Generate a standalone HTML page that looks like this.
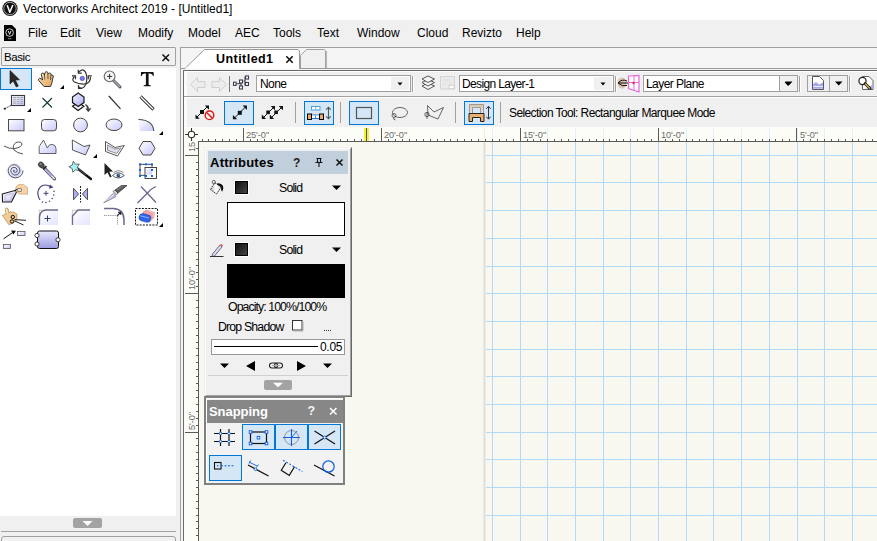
<!DOCTYPE html>
<html><head><meta charset="utf-8">
<style>
*{box-sizing:border-box;margin:0;padding:0}
html,body{width:877px;height:541px;overflow:hidden;background:#f0f0f0;font-family:"Liberation Sans",sans-serif;color:#000}
.a{position:absolute}
.t{position:absolute;white-space:nowrap;line-height:1}
svg.o{position:absolute;left:0;top:0;overflow:visible}
</style></head><body>
<div class="a" style="left:0px;top:0px;width:877px;height:20px;background:#fff;"></div>
<svg class="o" width="877" height="20">
<circle cx="10" cy="8.5" r="7.6" fill="#111"/>
<circle cx="10" cy="8.5" r="6.2" fill="none" stroke="#ddd" stroke-width="0.7"/>
<path d="M7.2 5.2 L9.8 12.3 L12.8 5.0" stroke="#fff" stroke-width="1.5" fill="none" stroke-linejoin="round"/>
</svg>
<div class="t" style="left:23px;top:3px;font-size:12px;">Vectorworks Architect 2019 - [Untitled1]</div>
<svg class="o" width="40" height="50">
<path d="M4 25 H12 L16 29 V41 H4 Z" fill="#000"/>
<circle cx="9.6" cy="32.6" r="3.8" fill="none" stroke="#fff" stroke-width="0.8"/>
<path d="M8.2 30.8 L9.6 34.4 L11.1 30.8" stroke="#fff" stroke-width="0.9" fill="none"/>
<rect x="8" y="38.2" width="3.5" height="1" fill="#888"/>
</svg>
<div class="t" style="left:28px;top:27px;font-size:12px;">File</div>
<div class="t" style="left:60px;top:27px;font-size:12px;">Edit</div>
<div class="t" style="left:96px;top:27px;font-size:12px;">View</div>
<div class="t" style="left:138px;top:27px;font-size:12px;">Modify</div>
<div class="t" style="left:188px;top:27px;font-size:12px;">Model</div>
<div class="t" style="left:235px;top:27px;font-size:12px;">AEC</div>
<div class="t" style="left:273px;top:27px;font-size:12px;">Tools</div>
<div class="t" style="left:317px;top:27px;font-size:12px;">Text</div>
<div class="t" style="left:357px;top:27px;font-size:12px;">Window</div>
<div class="t" style="left:417px;top:27px;font-size:12px;">Cloud</div>
<div class="t" style="left:462px;top:27px;font-size:12px;">Revizto</div>
<div class="t" style="left:516px;top:27px;font-size:12px;">Help</div>
<div class="a" style="left:0px;top:47px;width:177px;height:494px;background:#f0f0f0;"></div>
<div class="a" style="left:1px;top:47px;width:175px;height:19px;background:#f0f0f0;border:1px solid #a0a0a0;border-radius:1px;"></div>
<div class="t" style="left:4px;top:52px;font-size:11.5px;letter-spacing:-0.4px;">Basic</div>
<svg class="o" width="200" height="70"><path d="M162.5 54.5 L169 61 M169 54.5 L162.5 61" stroke="#111" stroke-width="1.5"/></svg>
<div class="a" style="left:0px;top:68px;width:176px;height:448px;background:#fff;"></div>
<div class="a" style="left:0px;top:516px;width:176px;height:15px;background:#f0f0f0;"></div>
<div class="a" style="left:73px;top:518px;width:29px;height:10px;background:#a3a3a3;border-radius:2px;"></div>
<svg class="o" width="200" height="541"><path d="M82.5 521 H92.5 L87.5 526 Z" fill="#fff"/></svg>
<div class="a" style="left:1px;top:531px;width:175px;height:1px;background:#a0a0a0;"></div>
<div class="a" style="left:1px;top:536px;width:175px;height:10px;border:1px solid #a0a0a0;border-radius:3px;"></div>
<svg class="o" width="877" height="541"><defs>
<linearGradient id="gf" x1="0" y1="0" x2="1" y2="1"><stop offset="0" stop-color="#ffffff"/><stop offset="1" stop-color="#c8c8ff"/></linearGradient>
<linearGradient id="gb" x1="0" y1="0" x2="0" y2="1"><stop offset="0" stop-color="#e8e8ff"/><stop offset="1" stop-color="#9c9ce0"/></linearGradient>
<linearGradient id="gb2" x1="0" y1="0" x2="1" y2="1"><stop offset="0" stop-color="#f2f2ff"/><stop offset="1" stop-color="#a8a8f4"/></linearGradient>
</defs>
<rect x="0.5" y="68.5" width="31" height="21" fill="#d5e6f6" stroke="#0078d7" stroke-width="1"/>
<path d="M10 70.5 L10 84 L13.2 81 L16.3 87 L18.3 86 L15.3 80 L19.5 79.8 Z" fill="#2a2a2a" stroke="#111" stroke-width="0.6"/>
<defs><linearGradient id="gh" x1="0" y1="0" x2="1" y2="1"><stop offset="0" stop-color="#fbf0c0"/><stop offset="0.5" stop-color="#f0c488"/><stop offset="1" stop-color="#e0a060"/></linearGradient></defs>
<path d="M44 86.5 L38.8 80.6 Q37.8 79 39.4 78.4 Q41 78.2 42.6 80 L41.3 74.6 Q41.2 73 42.8 73 Q44 73.3 44.4 75 L45 72.9 Q45.3 71.4 46.9 71.7 Q48.1 72 47.9 73.8 L48.4 73.6 Q49.5 72.7 50.6 73.4 Q51.2 74 50.9 75.6 L51.6 75 Q53 74.7 53.3 76.2 L52 82.2 L50.6 86.5 Z" fill="url(#gh)" stroke="#222" stroke-width="0.9"/>
<path d="M44.4 75 L44.9 79.5 M47.9 73.8 L48 79 M50.9 75.6 L50.5 80" stroke="#333" stroke-width="0.8"/>
<path d="M64 85 V89 H60 Z" fill="#000"/>
<g fill="none" stroke="#333" stroke-width="1.2">
<path d="M78.5 72.5 Q81 69.5 83.5 70 Q87 72.5 86.8 79 Q86.5 85 83.5 87.5 Q81 89 78.8 87"/>
<path d="M74.5 76.5 Q71.5 79.5 74 81.8 Q79 84.5 85.5 84 Q90.5 82.5 90.5 77"/>
<path d="M78.3 69.8 V73.2 H81.8 M72 75.8 H75.5 V79.2 M91.8 75.8 H88.3 V79.2 M78.5 85 V88.5 H82"/>
</g>
<circle cx="82.3" cy="78.4" r="2.2" fill="#7a7af0" stroke="#3838a8" stroke-width="0.6"/>
<line x1="113.5" y1="80.5" x2="120" y2="87" stroke="#555" stroke-width="3" stroke-linecap="round"/>
<line x1="113.8" y1="80.8" x2="119.6" y2="86.6" stroke="#aab" stroke-width="1.4" stroke-linecap="round"/>
<circle cx="109.6" cy="76.4" r="5.4" fill="#f4f4f4" stroke="#666" stroke-width="1.1"/>
<path d="M107 76.4 H112.2 M109.6 73.8 V79" stroke="#333" stroke-width="1"/>
<path d="M141 72 H153.5 L153.8 76 H153 Q152.5 73.5 150 73.5 H148.6 V84.6 Q148.8 85.3 150.8 85.4 V86.2 H143.6 V85.4 Q145.7 85.3 145.9 84.6 V73.5 H144.6 Q142 73.5 141.6 76 H140.8 Z" fill="#111"/>
<!-- row2 -->
<rect x="11.5" y="95.5" width="13" height="10" fill="url(#gf)" stroke="#3a3a3a" stroke-width="1.1"/>
<path d="M13 97.5 H23 M13 99.3 H23 M13 101.3 H23 M13 103.2 H23" stroke="#888" stroke-width="0.7" stroke-dasharray="3 0.6"/>
<path d="M5 108.6 L11.3 105.2" stroke="#333" stroke-width="0.9" stroke-dasharray="1.4 0.5"/><rect x="3.8" y="107.8" width="1.8" height="1.8" fill="#222"/>
<path d="M31 108 V112 H27 Z" fill="#000"/>
<path d="M42.5 98 L52 107.5 M52 98 L42.5 107.5" stroke="#183c3c" stroke-width="1.2"/>
<path d="M72.5 106.3 L78 102.5 L84 106.3 L78 110.5 Z" fill="#f0f0fc" stroke="#111" stroke-width="1.1"/>
<path d="M72.5 97 L78.2 93 L84 97 V102.6 L78.2 106.5 L72.5 102.6 Z" fill="url(#gb2)" stroke="#1a1a1a" stroke-width="1.2"/>
<path d="M73.5 98 L78.2 100.5 L83 98" fill="none" stroke="#fff" stroke-width="0.6" opacity="0.6"/>
<path d="M85.3 104 Q89 105.5 88.8 108.5 L91.5 108.2 L88.3 112.3 L85.3 108.5 L87 108.6 Q87 106.5 85.3 105.3 Z" fill="#444"/>
<line x1="108.8" y1="96" x2="120.5" y2="108.8" stroke="#333" stroke-width="1.25"/>
<line x1="140.5" y1="96.5" x2="153.5" y2="109.5" stroke="#333" stroke-width="3.2"/>
<line x1="140.5" y1="96.5" x2="153" y2="109" stroke="#fff" stroke-width="1.2"/>
<!-- row3 -->
<rect x="8.5" y="119.5" width="15.5" height="11.3" fill="url(#gf)" stroke="#4a4a40" stroke-width="1"/>
<rect x="41.5" y="119.5" width="15" height="11.3" rx="3" fill="url(#gf)" stroke="#4a4a40" stroke-width="1"/>
<circle cx="80.5" cy="125" r="6.9" fill="url(#gf)" stroke="#4a4a40" stroke-width="1"/>
<ellipse cx="114" cy="124.8" rx="8" ry="5.8" fill="url(#gf)" stroke="#4a4a40" stroke-width="1"/>
<path d="M138.5 119.5 Q153 120 153.8 131 H140 Z" fill="url(#gf)"/><path d="M138.5 119.5 Q153 120 153.8 131" fill="none" stroke="#4a4a40" stroke-width="1.1"/>
<path d="M163 131 V135 H159 Z" fill="#000"/>
<!-- row4 -->
<path d="M4 146 Q9 149 15 148.5 Q22 147 22 144 Q21 141 16 142.5 Q12 145 14 150 Q17 153 23 154" fill="none" stroke="#555" stroke-width="1"/>
<path d="M39.2 153.5 V146.5 L43.5 140 L47.3 148 Q49 144 52 144.3 Q56 145 56 148.5 V153.5 Z" fill="url(#gf)" stroke="#555" stroke-width="0.9"/>
<path d="M72.3 140 L84 146.5 L90 145 L85.5 155 L72.5 150 Z" fill="url(#gf)" stroke="#444" stroke-width="0.9"/>
<path d="M97 154 V158 H93 Z" fill="#000"/>
<path d="M105.5 141.5 L115 147.5 L124.3 145.5 L117.5 156 L105.5 151.5 Z" fill="none" stroke="#444" stroke-width="0.9"/>
<path d="M107.5 145 L115 149 L121 148 L116.8 153.5 L107.5 150.3 Z" fill="#dde" stroke="#777" stroke-width="0.8"/>
<path d="M143 141.5 H151 L155 148.3 L151 155 H143 L139 148.3 Z" fill="url(#gf)" stroke="#4a4a40" stroke-width="1"/>
<!-- row5 -->
<circle cx="14" cy="170.5" r="7.8" fill="url(#gf)"/>
<g fill="none" stroke="#4a4a4a" stroke-width="0.9">
<path d="M14.6 170.5 a0.6 0.6 0 1 0 -1.2 0 a1.9 1.9 0 1 0 3.8 0 a3.2 3.2 0 1 0 -6.4 0 a4.5 4.5 0 1 0 9 0 a5.8 5.8 0 1 0 -11.6 0 a7.4 7.4 0 1 0 14.8 0"/>
</g>
<path d="M44.5 168.5 L54.5 178.8" stroke="#555" stroke-width="3.3" stroke-linecap="round"/>
<path d="M44.8 168.8 L54.2 178.5" stroke="#b4b4f6" stroke-width="1.8" stroke-linecap="round"/>
<path d="M52 176.3 L54.3 178.6" stroke="#fff" stroke-width="1" stroke-linecap="round"/>
<ellipse cx="41.3" cy="165" rx="3.6" ry="2.9" transform="rotate(45 41.3 165)" fill="#4a4a4a"/>
<ellipse cx="40.6" cy="164" rx="1.3" ry="0.9" transform="rotate(45 40.6 164)" fill="#888"/>
<path d="M42.5 168.8 L45.8 165.5 L47 166.8 L43.8 170 Z" fill="#222"/>
<path d="M77.5 168.5 L91 179" stroke="#111" stroke-width="2.3" stroke-linecap="round"/>
<path d="M78.5 169 L86 175" stroke="#777" stroke-width="0.7"/>
<path d="M73.3 161.2 L75.5 164.3 L79.3 164 L77.3 167.2 L79 170.5 L75.3 169.8 L72.8 172.3 L72.2 168.6 L68.9 166.8 L72.3 165 Z" fill="#a6f2f4" stroke="#3a3a3a" stroke-width="0.7"/>
<path d="M104.5 163 L104.5 175 L107.5 172.5 L110 177.5 L111.7 176.7 L109.3 171.7 L113 171.5 Z" fill="#222"/>
<path d="M112.5 175.5 Q118 170 124.3 175.5 Q118 180.5 112.5 175.5 Z" fill="#fff" stroke="#444" stroke-width="0.9"/>
<path d="M113.5 172.5 Q118.5 169 123.5 172.5" fill="none" stroke="#555" stroke-width="0.7"/>
<circle cx="118.4" cy="175.4" r="1.9" fill="#2b5080"/><circle cx="119" cy="174.9" r="0.6" fill="#9cf"/>
<rect x="140" y="164.3" width="12" height="11" fill="none" stroke="#333" stroke-width="0.9"/>
<rect x="145" y="167.5" width="11.5" height="11" fill="#fff" stroke="#333" stroke-width="0.9"/>
<rect x="146" y="168.5" width="6" height="6" fill="url(#gf)"/>
<g fill="#0a64ff"><rect x="139" y="163.3" width="2" height="2"/><rect x="145" y="163.3" width="2" height="2"/><rect x="151" y="163.3" width="2" height="2"/><rect x="139" y="169" width="2" height="2"/><rect x="151" y="169" width="2" height="2"/><rect x="139" y="175" width="2" height="2"/><rect x="145" y="175" width="2" height="2"/><rect x="151" y="175" width="2" height="2"/></g>
<!-- row6 -->
<path d="M2.3 194 L15.5 190.3 L16.5 192 L11.5 202 L2.5 202 Z" fill="url(#gf)" stroke="#1a1a1a" stroke-width="1.1"/>
<path d="M5 195.5 L13.5 193.3 L10.5 200.3 L5 200.3 Z" fill="none" stroke="#aab" stroke-width="0.6"/>
<path d="M15.5 188.5 Q16.5 184.5 20 184.3 L23.5 184.5 L27.5 187.5 V194.3 L19 194 Q16 192.5 15.5 188.5 Z" fill="#f6d2a4" stroke="#b08a5a" stroke-width="0.5"/>
<rect x="17.8" y="188.8" width="3.4" height="2.4" fill="#fff" stroke="#333" stroke-width="0.6"/>
<path d="M14.5 191 L17 189" stroke="#222" stroke-width="1"/>
<g stroke="#44447a" fill="none" stroke-width="1.2"><path d="M51 187 Q47 184 42.5 185.5 Q38 188 37.8 193 Q38 197 40 200"/></g>
<path d="M50 184.5 L53.5 187.5 L49 188.8 Z" fill="#44447a"/>
<g fill="#44447a"><circle cx="42.5" cy="202" r="0.8"/><circle cx="46" cy="202.5" r="0.8"/><circle cx="49.5" cy="201.2" r="0.8"/><circle cx="52.2" cy="198.5" r="0.8"/><circle cx="53.8" cy="195" r="0.8"/><circle cx="54" cy="191.3" r="0.8"/></g>
<path d="M43.5 193.3 H48.5 M46 190.8 V195.8" stroke="#44447a" stroke-width="1"/>
<path d="M73.5 188.3 L78.6 194 L73.5 199.8 Z M87.5 188.3 L82.4 194 L87.5 199.8 Z" fill="#b0b0f4" stroke="#444" stroke-width="0.9"/>
<path d="M80.5 186 V202.5" stroke="#222" stroke-width="1" stroke-dasharray="2 1"/>
<path d="M103.8 202.8 L113 193.5 L116 196.5 Z" fill="#c8c8fa" stroke="#444" stroke-width="0.6"/>
<path d="M104.5 202 L113.5 194.5" stroke="#fff" stroke-width="0.6"/>
<path d="M113 191.5 L115 190 L118 193 L116.3 195 Z" fill="#d8d8d8" stroke="#333" stroke-width="0.6"/>
<path d="M115 190 L121.5 185.5 H127 L118 193 Z" fill="#5a5a5a" stroke="#222" stroke-width="0.6"/>
<path d="M117 190 L123 186" stroke="#999" stroke-width="0.7"/>
<path d="M137.5 203 L150.5 190 M141 186.5 L156 202.5 M150 190 L155.8 186.5" stroke="#6a6a90" stroke-width="1.3"/>
<!-- row7 -->
<path d="M2.5 215.5 L6 213.8 L5.3 208.8 Q6.5 207.3 8 208.5 L9 213 L10.5 211.6 L12 212.4 L13.5 212 L15 213 L16.8 214 L17 219.5 L14 222.5 L9 224.8 Z" fill="#f3cc95" stroke="#8a6030" stroke-width="0.5"/>
<path d="M6.2 209 L7.3 213.5" stroke="#fff3c0" stroke-width="1"/>
<circle cx="12.8" cy="217" r="1.7" fill="none" stroke="#111" stroke-width="1"/>
<circle cx="12" cy="221.5" r="1.7" fill="none" stroke="#111" stroke-width="1"/>
<path d="M14.5 219.6 L26 220.3 M14.5 220.8 L23.5 225" stroke="#222" stroke-width="1"/>
<path d="M39.5 225 V217 Q40 210.5 46 210 H58" fill="none" stroke="#6a6a90" stroke-width="1.4"/>
<path d="M41 212 V225 H58 V211 H46 Q41 211 41 217 Z" fill="url(#gf)" opacity="0.5"/>
<path d="M39.3 216.5 V210.2 H46" fill="none" stroke="#555" stroke-width="0.7" stroke-dasharray="0.9 1"/>
<path d="M44.5 218.5 H50.5 M47.5 215.5 V221.5" stroke="#3a3a70" stroke-width="1"/>
<path d="M72.5 225 V216 L78 210 H90" fill="none" stroke="#6a6a90" stroke-width="1.4"/>
<path d="M73.5 217 L78.5 211.2 H90 V225 H73.5 Z" fill="url(#gf)" opacity="0.5"/>
<path d="M72.3 215.5 V210.2 H78" fill="none" stroke="#555" stroke-width="0.7" stroke-dasharray="0.9 1"/>
<path d="M104 208.5 H113 Q124 209 124 220 V225" fill="none" stroke="#6a6a90" stroke-width="1.5"/>
<path d="M104 215.5 H116 M117.5 216 V225" fill="none" stroke="#444" stroke-width="0.7" stroke-dasharray="0.9 1"/>
<path d="M117 216 L120.5 212.5 M118 212.3 H120.8 V215" fill="none" stroke="#223" stroke-width="1.1"/>
<rect x="135.5" y="208.5" width="22" height="16.5" fill="none" stroke="#111" stroke-width="1" stroke-dasharray="2 1.2"/>
<path d="M143 212 L147 210 L154.5 212.5 L153.8 217.5 L149.5 222 L144 215 Z" fill="#f2a4a4" stroke="#c07070" stroke-width="0.5"/>
<path d="M147.5 210.5 L154 213 L153 217" fill="none" stroke="#fff" stroke-width="0.6" opacity="0.7"/>
<path d="M139 216.8 Q139.8 213.6 143 213.6 L150 215.6 Q151.2 216.6 150.7 218.2 L149.6 221.6 Q148.6 222.6 146 222.1 L140.6 220.6 Q139 219.6 139 218 Z" fill="#2d66ea" stroke="#0c2c92" stroke-width="0.5"/>
<path d="M140.3 215.8 L149 218" stroke="#a8c4ff" stroke-width="0.8"/>
<path d="M163 223 V227 H159 Z" fill="#000"/>
<!-- row8 -->
<path d="M3.5 238.8 L13.5 232" stroke="#111" stroke-width="1"/><path d="M11 230.5 L16 230.8 L13.5 234.5 Z" fill="#111"/>
<rect x="17.5" y="231.5" width="7.5" height="4" fill="url(#gf)" stroke="#555" stroke-width="0.8"/>
<rect x="3.5" y="244.5" width="7" height="4" fill="url(#gf)" stroke="#555" stroke-width="0.8"/>
<rect x="37.5" y="231" width="21" height="17.5" rx="2" fill="url(#gb)" stroke="#111" stroke-width="1"/>
<circle cx="37" cy="235.5" r="2.1" fill="#fff" stroke="#111" stroke-width="0.8"/>
<circle cx="37" cy="244" r="2.1" fill="#fff" stroke="#111" stroke-width="0.8"/>
<circle cx="58" cy="239.8" r="2.1" fill="#fff" stroke="#111" stroke-width="0.8"/>
</svg>
<div class="a" style="left:180px;top:47px;width:697px;height:494px;background:#f5f5f5;border-left:1px solid #a0a0a0;border-top:1px solid #a0a0a0;"></div>
<svg class="o" width="877" height="541">
<path d="M300.5 68.5 V55.5 L306.5 49.5 H324.5 L325.5 50.5 V68.5 Z" fill="#f0f0f0" stroke="#a0a0a0" stroke-width="1"/>
<path d="M326.5 51 V68.5" stroke="#b8b8b8" stroke-width="1.2"/>
<path d="M181 68.5 H185 L204.5 49.5 H298 L299.5 51 V68.5 H877" fill="#fff" stroke="#999" stroke-width="1"/>
<path d="M185.5 68 H299" stroke="#fff" stroke-width="1"/>
<path d="M286.3 56.3 L292.7 62.7 M292.7 56.3 L286.3 62.7" stroke="#111" stroke-width="1.6"/>
</svg>
<div class="t" style="left:216px;top:53px;font-size:12.5px;font-weight:700;letter-spacing:0.45px;">Untitled1</div>
<div class="a" style="left:183px;top:70px;width:694px;height:471px;background:#f0f0f0;border-left:1px solid #6a6a6a;border-top:1px solid #6a6a6a;"></div>
<div class="a" style="left:184px;top:71px;width:693px;height:1px;background:#fff;"></div>
<div class="a" style="left:184px;top:71px;width:3px;height:56px;background:#fafafa;"></div>
<div class="a" style="left:184px;top:96px;width:693px;height:1px;background:#a0a0a0;"></div>
<div class="a" style="left:184px;top:97px;width:693px;height:1px;background:#fff;"></div>
<div class="a" style="left:256px;top:75px;width:155px;height:17px;background:#fff;border:1px solid #a0a0a0;"></div>
<div class="a" style="left:391px;top:77px;width:18px;height:13px;background:#f0f0f0;"></div>
<svg class="o" width="877" height="541"><path d="M397.5 82.5 H402.5 L400 85.5 Z" fill="#000"/></svg>
<div class="a" style="left:459px;top:75px;width:155px;height:17px;background:#fff;border:1px solid #a0a0a0;"></div>
<div class="a" style="left:594px;top:77px;width:18px;height:13px;background:#f0f0f0;"></div>
<svg class="o" width="877" height="541"><path d="M600.5 82.5 H605.5 L603 85.5 Z" fill="#000"/></svg>
<div class="a" style="left:643px;top:75px;width:155px;height:17px;background:#fff;border:1px solid #a0a0a0;"></div>
<div class="a" style="left:779px;top:75px;width:19px;height:17px;background:#f0f0f0;border:1px solid #a0a0a0;"></div>
<svg class="o" width="877" height="541"><path d="M784.5 82 H791.5 L788 86 Z" fill="#000"/></svg>
<div class="t" style="left:260px;top:78px;font-size:12px;letter-spacing:-0.6px;">None</div>
<div class="t" style="left:462px;top:78px;font-size:12px;letter-spacing:-0.65px;">Design Layer-1</div>
<div class="t" style="left:646px;top:78px;font-size:12px;letter-spacing:-0.55px;">Layer Plane</div>
<div class="a" style="left:807px;top:75px;width:41px;height:17px;background:#f0f0f0;border:1px solid #a0a0a0;"></div>
<div class="a" style="left:829px;top:75px;width:1px;height:17px;background:#a0a0a0;"></div>
<svg class="o" width="877" height="541">
<path d="M190.5 84.5 L197.5 77.5 V81.5 H205 V87.5 H197.5 V91.5 Z" fill="#ececec" stroke="#cfcfcf" stroke-width="1"/>
<path d="M226.5 84.5 L219.5 77.5 V81.5 H212 V87.5 H219.5 V91.5 Z" fill="#ececec" stroke="#cfcfcf" stroke-width="1"/>
<path d="M229.5 76 V92" stroke="#777" stroke-width="1"/>
<g fill="#fff" stroke="#3c3c50" stroke-width="1.1">
<path d="M236 83.8 H241 M241 81 V86.5 M243.5 81 H245 V76.5 M245 81 V85.5"/>
<rect x="233.5" y="82.2" width="2.6" height="3.2"/>
<rect x="239.5" y="80" width="3" height="3"/>
<rect x="239.5" y="86" width="3" height="3"/>
<rect x="245.5" y="76" width="3" height="3"/>
<rect x="245.5" y="82.5" width="3" height="3"/>
</g>
<rect x="412" y="76" width="1" height="16" fill="#a0a0a0"/><rect x="413" y="76" width="1" height="16" fill="#fdfdfd"/><rect x="615" y="76" width="1" height="16" fill="#a0a0a0"/><rect x="616" y="76" width="1" height="16" fill="#fdfdfd"/><rect x="799" y="76" width="1" height="16" fill="#a0a0a0"/><rect x="800" y="76" width="1" height="16" fill="#fdfdfd"/><rect x="849" y="76" width="1" height="16" fill="#a0a0a0"/><rect x="850" y="76" width="1" height="16" fill="#fdfdfd"/>
<g fill="#f4f4f4" stroke="#444" stroke-width="0.9">
<path d="M422 86 L428 83 L434.5 86 L428 89.5 Z"/>
<path d="M422 82.5 L428 79.5 L434.5 82.5 L428 86 Z"/>
<path d="M422 79 L428 76 L434.5 79 L428 82.5 Z"/>
</g>
<rect x="440.5" y="76.5" width="14" height="12.5" fill="#eaeaea" stroke="#d4d4d4" stroke-width="1"/>
<path d="M443 80 H451 M443 84 H447 M449 84 H453" stroke="#d0d0d0" stroke-width="1" stroke-dasharray="1 1"/>
<rect x="449" y="85.5" width="5" height="3" fill="#fff" stroke="#d0d0d0" stroke-width="0.8"/>
<ellipse cx="622" cy="83" rx="4.5" ry="5.5" fill="#c8a078" opacity="0.55"/>
<path d="M618 83 Q622 78.5 627 81 M618 83 Q622 87 627 85.5" fill="none" stroke="#111" stroke-width="1"/>
<path d="M618.5 83 H632" stroke="#111" stroke-width="1"/>
<path d="M628.5 76 L639 75.5 V92 L628.5 88.5 Z" fill="#fff" stroke="#ee66dd" stroke-width="1.2"/>
<path d="M634 75.5 V90 M628.5 82.5 H639" stroke="#ee66dd" stroke-width="1"/>
<circle cx="633.5" cy="83" r="1" fill="#d00"/>
<path d="M785 81.5 H792.5 L788.7 85.5 Z" fill="#000"/>
<path d="M835 81.5 H842.5 L838.7 85.5 Z" fill="#000"/>
<path d="M812.5 76.5 H819.5 L823.5 80.5 V89.5 H812.5 Z" fill="#fff" stroke="#444" stroke-width="0.9"/>
<path d="M813 88.8 V84 L816 82 L819 84.5 L823 82.5 V88.8 Z" fill="#a8a8f0"/>
<path d="M813 86.5 H823" stroke="#fff" stroke-width="0.8"/>
<path d="M862.5 76.5 H869 L873 80.5 V89.5 H862.5 Z" fill="#fff" stroke="#555" stroke-width="0.9"/>
<path d="M866 89 H873 V84 Z" fill="#b0b0f0"/>
<circle cx="862.5" cy="81" r="3.6" fill="#fff" stroke="#222" stroke-width="1.2"/>
<path d="M865 83.5 L870 88.5" stroke="#222" stroke-width="2.8" stroke-linecap="round"/>
<path d="M865.5 84 L869.6 88.1" stroke="#d8b040" stroke-width="1.3" stroke-linecap="round"/>
</svg>
<div class="t" style="left:509px;top:107px;font-size:12px;letter-spacing:-0.6px;">Selection Tool: Rectangular Marquee Mode</div>
<svg class="o" width="877" height="541">
<rect x="224.5" y="101.5" width="29" height="23" fill="#d5e6f6" stroke="#0078d7" stroke-width="1"/><rect x="304.5" y="101.5" width="29" height="23" fill="#d5e6f6" stroke="#0078d7" stroke-width="1"/><rect x="349.5" y="101.5" width="29" height="23" fill="#d5e6f6" stroke="#0078d7" stroke-width="1"/><rect x="464.5" y="101.5" width="29" height="23" fill="#d5e6f6" stroke="#0078d7" stroke-width="1"/>
<path d="M295.5 102 V123 M340.5 102 V123 M455.5 102 V123 M500.5 102 V123" stroke="#a0a0a0" stroke-width="1"/>
<g fill="#111">
<path d="M197 117 L207.5 106.5" stroke="#111" stroke-width="1"/>
<path d="M204.8 105.5 H209 V109.7 Z M195.5 114.5 V118.7 H199.7 Z"/>
<rect x="200" y="110" width="4" height="4"/>
</g>
<circle cx="209.5" cy="115.3" r="4.3" fill="none" stroke="#e01818" stroke-width="1.4"/>
<path d="M206.6 112.4 L212.4 118.2" stroke="#e01818" stroke-width="1.4"/>
<g fill="#111">
<path d="M234.5 118 L245.5 107" stroke="#111" stroke-width="1"/>
<path d="M242.6 105.6 H246.9 V109.9 Z M232.9 114.9 V119.2 H237.2 Z"/>
<rect x="237.8" y="110.8" width="4" height="4"/>
</g>
<g fill="#111">
<path d="M263.5 117.5 L273.5 107.5 M271.5 117.5 L281.5 107.5" stroke="#111" stroke-width="1"/>
<path d="M270.7 105.9 H275 V110.2 Z M278.7 105.9 H283 V110.2 Z M261.8 114.6 V118.9 H266.1 Z M269.8 114.6 V118.9 H274.1 Z"/>
<rect x="266.3" y="110.5" width="3.6" height="3.6"/><rect x="274.3" y="110.5" width="3.6" height="3.6"/>
</g>
<rect x="311.5" y="106.5" width="8.5" height="3.5" fill="#fff" stroke="#4aa0e0" stroke-width="1"/><path d="M315.8 106.5 V110" stroke="#4aa0e0" stroke-width="0.8"/>
<path d="M311.5 115 H319.5 M311.5 118.5 H319.5" stroke="#1a7ad0" stroke-width="1"/>
<rect x="311.5" y="115.5" width="8" height="2.5" fill="#fff"/><path d="M315.5 115.5 V118" stroke="#1a7ad0" stroke-width="0.8"/>
<rect x="307.5" y="114" width="4" height="5.5" fill="#e6aa6a" stroke="#000" stroke-width="1"/>
<rect x="319.5" y="114" width="4" height="5.5" fill="#e6aa6a" stroke="#000" stroke-width="1"/>
<path d="M328.5 107.5 V118.5 M326.2 109.6 L328.5 107.2 L330.8 109.6 M326.2 116.4 L328.5 118.8 L330.8 116.4" fill="none" stroke="#555" stroke-width="1.1"/>
<rect x="356.5" y="107.5" width="15" height="11" fill="none" stroke="#555" stroke-width="1.2"/>
<ellipse cx="400" cy="112.5" rx="7.5" ry="5" fill="none" stroke="#555" stroke-width="0.9"/>
<circle cx="394" cy="115.5" r="2" fill="none" stroke="#444" stroke-width="0.8"/><path d="M394 117.5 Q392.5 119.5 395.5 120" fill="none" stroke="#444" stroke-width="0.8"/>
<path d="M427.5 105.5 L434 112 L443.5 107.5 L438 119 L428 115 Z" fill="none" stroke="#555" stroke-width="0.9"/>
<circle cx="427" cy="114.5" r="2.2" fill="none" stroke="#444" stroke-width="0.8"/><path d="M427 112 V119" stroke="#444" stroke-width="0.8"/>
<defs><linearGradient id="gt" x1="0" y1="0" x2="0" y2="1"><stop offset="0" stop-color="#dcc4a4"/><stop offset="1" stop-color="#d5e6f6"/></linearGradient></defs>
<path d="M469 113 V104 H484 V113 H481 V107 H472 V113 Z" fill="url(#gt)"/>
<path d="M469.5 113 V104.5 H483.5 V113 M472.5 113 V107.5 H480.5 V113" fill="none" stroke="#a09890" stroke-width="1"/>
<path d="M469 121.5 V113.5 H484 V121.5 H480.5 V117.5 H472.5 V121.5 Z" fill="#eab070" stroke="#222" stroke-width="1"/>
<path d="M488.5 106.5 V119 M486.3 108.8 L488.5 106.3 L490.7 108.8 M486.3 116.7 L488.5 119.2 L490.7 116.7" fill="none" stroke="#333" stroke-width="1"/>
</svg>
<div class="a" style="left:184px;top:127px;width:693px;height:15px;background:#fdfdf8;"></div>
<div class="a" style="left:184px;top:127px;width:15px;height:414px;background:#fdfdf8;"></div>
<div class="a" style="left:199px;top:142px;width:678px;height:399px;background:#f8f8f0;"></div>
<svg class="o" width="877" height="541" shape-rendering="crispEdges"><rect x="492" y="142" width="1" height="399" fill="#b0daf8"/><rect x="492" y="128" width="1" height="11" fill="#e4f0fa"/><rect x="520" y="142" width="1" height="399" fill="#b0daf8"/><rect x="520" y="128" width="1" height="11" fill="#e4f0fa"/><rect x="547" y="142" width="1" height="399" fill="#b0daf8"/><rect x="547" y="128" width="1" height="11" fill="#e4f0fa"/><rect x="575" y="142" width="1" height="399" fill="#b0daf8"/><rect x="575" y="128" width="1" height="11" fill="#e4f0fa"/><rect x="603" y="142" width="1" height="399" fill="#b0daf8"/><rect x="603" y="128" width="1" height="11" fill="#e4f0fa"/><rect x="630" y="142" width="1" height="399" fill="#b0daf8"/><rect x="630" y="128" width="1" height="11" fill="#e4f0fa"/><rect x="658" y="142" width="1" height="399" fill="#b0daf8"/><rect x="658" y="128" width="1" height="11" fill="#e4f0fa"/><rect x="686" y="142" width="1" height="399" fill="#b0daf8"/><rect x="686" y="128" width="1" height="11" fill="#e4f0fa"/><rect x="713" y="142" width="1" height="399" fill="#b0daf8"/><rect x="713" y="128" width="1" height="11" fill="#e4f0fa"/><rect x="741" y="142" width="1" height="399" fill="#b0daf8"/><rect x="741" y="128" width="1" height="11" fill="#e4f0fa"/><rect x="769" y="142" width="1" height="399" fill="#b0daf8"/><rect x="769" y="128" width="1" height="11" fill="#e4f0fa"/><rect x="797" y="142" width="1" height="399" fill="#b0daf8"/><rect x="797" y="128" width="1" height="11" fill="#e4f0fa"/><rect x="824" y="142" width="1" height="399" fill="#b0daf8"/><rect x="824" y="128" width="1" height="11" fill="#e4f0fa"/><rect x="852" y="142" width="1" height="399" fill="#b0daf8"/><rect x="852" y="128" width="1" height="11" fill="#e4f0fa"/><rect x="485" y="155" width="392" height="1" fill="#b0daf8"/><rect x="485" y="182" width="392" height="1" fill="#b0daf8"/><rect x="485" y="210" width="392" height="1" fill="#b0daf8"/><rect x="485" y="238" width="392" height="1" fill="#b0daf8"/><rect x="485" y="266" width="392" height="1" fill="#b0daf8"/><rect x="485" y="293" width="392" height="1" fill="#b0daf8"/><rect x="485" y="321" width="392" height="1" fill="#b0daf8"/><rect x="485" y="349" width="392" height="1" fill="#b0daf8"/><rect x="485" y="376" width="392" height="1" fill="#b0daf8"/><rect x="485" y="404" width="392" height="1" fill="#b0daf8"/><rect x="485" y="432" width="392" height="1" fill="#b0daf8"/><rect x="485" y="459" width="392" height="1" fill="#b0daf8"/><rect x="485" y="487" width="392" height="1" fill="#b0daf8"/><rect x="485" y="515" width="392" height="1" fill="#b0daf8"/><rect x="484" y="142" width="1" height="399" fill="#dcdcd5"/><rect x="483" y="142" width="1" height="399" fill="#ecebe4"/><rect x="485" y="142" width="1" height="399" fill="#eeede6"/><rect x="484" y="128" width="1" height="11" fill="#ededea"/><rect x="198" y="141" width="679" height="1" fill="#5a5a5a"/><rect x="202" y="139" width="1" height="2" fill="#5a5a5a"/><rect x="208" y="139" width="1" height="2" fill="#5a5a5a"/><rect x="215" y="139" width="1" height="2" fill="#5a5a5a"/><rect x="222" y="139" width="1" height="2" fill="#5a5a5a"/><rect x="229" y="139" width="1" height="2" fill="#5a5a5a"/><rect x="236" y="139" width="1" height="2" fill="#5a5a5a"/><rect x="243" y="128" width="1" height="13" fill="#5a5a5a"/><rect x="250" y="139" width="1" height="2" fill="#5a5a5a"/><rect x="257" y="139" width="1" height="2" fill="#5a5a5a"/><rect x="264" y="139" width="1" height="2" fill="#5a5a5a"/><rect x="271" y="139" width="1" height="2" fill="#5a5a5a"/><rect x="278" y="139" width="1" height="2" fill="#5a5a5a"/><rect x="284" y="139" width="1" height="2" fill="#5a5a5a"/><rect x="291" y="139" width="1" height="2" fill="#5a5a5a"/><rect x="298" y="139" width="1" height="2" fill="#5a5a5a"/><rect x="305" y="139" width="1" height="2" fill="#5a5a5a"/><rect x="312" y="139" width="1" height="2" fill="#5a5a5a"/><rect x="319" y="139" width="1" height="2" fill="#5a5a5a"/><rect x="326" y="139" width="1" height="2" fill="#5a5a5a"/><rect x="333" y="139" width="1" height="2" fill="#5a5a5a"/><rect x="340" y="139" width="1" height="2" fill="#5a5a5a"/><rect x="347" y="139" width="1" height="2" fill="#5a5a5a"/><rect x="354" y="139" width="1" height="2" fill="#5a5a5a"/><rect x="361" y="139" width="1" height="2" fill="#5a5a5a"/><rect x="367" y="139" width="1" height="2" fill="#5a5a5a"/><rect x="374" y="139" width="1" height="2" fill="#5a5a5a"/><rect x="381" y="128" width="1" height="13" fill="#5a5a5a"/><rect x="388" y="139" width="1" height="2" fill="#5a5a5a"/><rect x="395" y="139" width="1" height="2" fill="#5a5a5a"/><rect x="402" y="139" width="1" height="2" fill="#5a5a5a"/><rect x="409" y="139" width="1" height="2" fill="#5a5a5a"/><rect x="416" y="139" width="1" height="2" fill="#5a5a5a"/><rect x="423" y="139" width="1" height="2" fill="#5a5a5a"/><rect x="430" y="139" width="1" height="2" fill="#5a5a5a"/><rect x="437" y="139" width="1" height="2" fill="#5a5a5a"/><rect x="444" y="139" width="1" height="2" fill="#5a5a5a"/><rect x="450" y="139" width="1" height="2" fill="#5a5a5a"/><rect x="457" y="139" width="1" height="2" fill="#5a5a5a"/><rect x="464" y="139" width="1" height="2" fill="#5a5a5a"/><rect x="471" y="139" width="1" height="2" fill="#5a5a5a"/><rect x="478" y="139" width="1" height="2" fill="#5a5a5a"/><rect x="485" y="139" width="1" height="2" fill="#5a5a5a"/><rect x="492" y="139" width="1" height="2" fill="#5a5a5a"/><rect x="499" y="139" width="1" height="2" fill="#5a5a5a"/><rect x="506" y="139" width="1" height="2" fill="#5a5a5a"/><rect x="513" y="139" width="1" height="2" fill="#5a5a5a"/><rect x="520" y="128" width="1" height="13" fill="#5a5a5a"/><rect x="527" y="139" width="1" height="2" fill="#5a5a5a"/><rect x="533" y="139" width="1" height="2" fill="#5a5a5a"/><rect x="540" y="139" width="1" height="2" fill="#5a5a5a"/><rect x="547" y="139" width="1" height="2" fill="#5a5a5a"/><rect x="554" y="139" width="1" height="2" fill="#5a5a5a"/><rect x="561" y="139" width="1" height="2" fill="#5a5a5a"/><rect x="568" y="139" width="1" height="2" fill="#5a5a5a"/><rect x="575" y="139" width="1" height="2" fill="#5a5a5a"/><rect x="582" y="139" width="1" height="2" fill="#5a5a5a"/><rect x="589" y="139" width="1" height="2" fill="#5a5a5a"/><rect x="596" y="139" width="1" height="2" fill="#5a5a5a"/><rect x="603" y="139" width="1" height="2" fill="#5a5a5a"/><rect x="609" y="139" width="1" height="2" fill="#5a5a5a"/><rect x="616" y="139" width="1" height="2" fill="#5a5a5a"/><rect x="623" y="139" width="1" height="2" fill="#5a5a5a"/><rect x="630" y="139" width="1" height="2" fill="#5a5a5a"/><rect x="637" y="139" width="1" height="2" fill="#5a5a5a"/><rect x="644" y="139" width="1" height="2" fill="#5a5a5a"/><rect x="651" y="139" width="1" height="2" fill="#5a5a5a"/><rect x="658" y="128" width="1" height="13" fill="#5a5a5a"/><rect x="665" y="139" width="1" height="2" fill="#5a5a5a"/><rect x="672" y="139" width="1" height="2" fill="#5a5a5a"/><rect x="679" y="139" width="1" height="2" fill="#5a5a5a"/><rect x="686" y="139" width="1" height="2" fill="#5a5a5a"/><rect x="692" y="139" width="1" height="2" fill="#5a5a5a"/><rect x="699" y="139" width="1" height="2" fill="#5a5a5a"/><rect x="706" y="139" width="1" height="2" fill="#5a5a5a"/><rect x="713" y="139" width="1" height="2" fill="#5a5a5a"/><rect x="720" y="139" width="1" height="2" fill="#5a5a5a"/><rect x="727" y="139" width="1" height="2" fill="#5a5a5a"/><rect x="734" y="139" width="1" height="2" fill="#5a5a5a"/><rect x="741" y="139" width="1" height="2" fill="#5a5a5a"/><rect x="748" y="139" width="1" height="2" fill="#5a5a5a"/><rect x="755" y="139" width="1" height="2" fill="#5a5a5a"/><rect x="762" y="139" width="1" height="2" fill="#5a5a5a"/><rect x="769" y="139" width="1" height="2" fill="#5a5a5a"/><rect x="775" y="139" width="1" height="2" fill="#5a5a5a"/><rect x="782" y="139" width="1" height="2" fill="#5a5a5a"/><rect x="789" y="139" width="1" height="2" fill="#5a5a5a"/><rect x="796" y="128" width="1" height="13" fill="#5a5a5a"/><rect x="803" y="139" width="1" height="2" fill="#5a5a5a"/><rect x="810" y="139" width="1" height="2" fill="#5a5a5a"/><rect x="817" y="139" width="1" height="2" fill="#5a5a5a"/><rect x="824" y="139" width="1" height="2" fill="#5a5a5a"/><rect x="831" y="139" width="1" height="2" fill="#5a5a5a"/><rect x="838" y="139" width="1" height="2" fill="#5a5a5a"/><rect x="845" y="139" width="1" height="2" fill="#5a5a5a"/><rect x="852" y="139" width="1" height="2" fill="#5a5a5a"/><rect x="858" y="139" width="1" height="2" fill="#5a5a5a"/><rect x="865" y="139" width="1" height="2" fill="#5a5a5a"/><rect x="872" y="139" width="1" height="2" fill="#5a5a5a"/><rect x="198" y="141" width="1" height="400" fill="#5a5a5a"/><rect x="196" y="148" width="2" height="1" fill="#5a5a5a"/><rect x="185" y="155" width="13" height="1" fill="#5a5a5a"/><rect x="196" y="162" width="2" height="1" fill="#5a5a5a"/><rect x="196" y="169" width="2" height="1" fill="#5a5a5a"/><rect x="196" y="175" width="2" height="1" fill="#5a5a5a"/><rect x="196" y="182" width="2" height="1" fill="#5a5a5a"/><rect x="196" y="189" width="2" height="1" fill="#5a5a5a"/><rect x="196" y="196" width="2" height="1" fill="#5a5a5a"/><rect x="196" y="203" width="2" height="1" fill="#5a5a5a"/><rect x="196" y="210" width="2" height="1" fill="#5a5a5a"/><rect x="196" y="217" width="2" height="1" fill="#5a5a5a"/><rect x="196" y="224" width="2" height="1" fill="#5a5a5a"/><rect x="196" y="231" width="2" height="1" fill="#5a5a5a"/><rect x="196" y="238" width="2" height="1" fill="#5a5a5a"/><rect x="196" y="245" width="2" height="1" fill="#5a5a5a"/><rect x="196" y="252" width="2" height="1" fill="#5a5a5a"/><rect x="196" y="259" width="2" height="1" fill="#5a5a5a"/><rect x="196" y="265" width="2" height="1" fill="#5a5a5a"/><rect x="196" y="272" width="2" height="1" fill="#5a5a5a"/><rect x="196" y="279" width="2" height="1" fill="#5a5a5a"/><rect x="196" y="286" width="2" height="1" fill="#5a5a5a"/><rect x="185" y="293" width="13" height="1" fill="#5a5a5a"/><rect x="196" y="300" width="2" height="1" fill="#5a5a5a"/><rect x="196" y="307" width="2" height="1" fill="#5a5a5a"/><rect x="196" y="314" width="2" height="1" fill="#5a5a5a"/><rect x="196" y="321" width="2" height="1" fill="#5a5a5a"/><rect x="196" y="328" width="2" height="1" fill="#5a5a5a"/><rect x="196" y="335" width="2" height="1" fill="#5a5a5a"/><rect x="196" y="342" width="2" height="1" fill="#5a5a5a"/><rect x="196" y="348" width="2" height="1" fill="#5a5a5a"/><rect x="196" y="355" width="2" height="1" fill="#5a5a5a"/><rect x="196" y="362" width="2" height="1" fill="#5a5a5a"/><rect x="196" y="369" width="2" height="1" fill="#5a5a5a"/><rect x="196" y="376" width="2" height="1" fill="#5a5a5a"/><rect x="196" y="383" width="2" height="1" fill="#5a5a5a"/><rect x="196" y="390" width="2" height="1" fill="#5a5a5a"/><rect x="196" y="397" width="2" height="1" fill="#5a5a5a"/><rect x="196" y="404" width="2" height="1" fill="#5a5a5a"/><rect x="196" y="411" width="2" height="1" fill="#5a5a5a"/><rect x="196" y="418" width="2" height="1" fill="#5a5a5a"/><rect x="196" y="425" width="2" height="1" fill="#5a5a5a"/><rect x="185" y="432" width="13" height="1" fill="#5a5a5a"/><rect x="196" y="438" width="2" height="1" fill="#5a5a5a"/><rect x="196" y="445" width="2" height="1" fill="#5a5a5a"/><rect x="196" y="452" width="2" height="1" fill="#5a5a5a"/><rect x="196" y="459" width="2" height="1" fill="#5a5a5a"/><rect x="196" y="466" width="2" height="1" fill="#5a5a5a"/><rect x="196" y="473" width="2" height="1" fill="#5a5a5a"/><rect x="196" y="480" width="2" height="1" fill="#5a5a5a"/><rect x="196" y="487" width="2" height="1" fill="#5a5a5a"/><rect x="196" y="494" width="2" height="1" fill="#5a5a5a"/><rect x="196" y="501" width="2" height="1" fill="#5a5a5a"/><rect x="196" y="508" width="2" height="1" fill="#5a5a5a"/><rect x="196" y="515" width="2" height="1" fill="#5a5a5a"/><rect x="196" y="521" width="2" height="1" fill="#5a5a5a"/><rect x="196" y="528" width="2" height="1" fill="#5a5a5a"/><rect x="196" y="535" width="2" height="1" fill="#5a5a5a"/></svg>
<svg class="o" width="877" height="541">
<circle cx="191.5" cy="134.5" r="3.2" fill="none" stroke="#333" stroke-width="1.1"/>
<path d="M185 134.5 H189 M194 134.5 H198 M191.5 128 V132 M191.5 137 V141" stroke="#333" stroke-width="1.1"/>
<rect x="364" y="128" width="5" height="13" fill="#f4f040"/>
<rect x="366" y="128" width="1" height="13" fill="#555"/>
</svg>
<div class="t" style="left:246px;top:131px;font-size:9.2px;color:#6a6a6a;letter-spacing:-0.05px;">25'-0"</div>
<div class="t" style="left:384px;top:131px;font-size:9.2px;color:#6a6a6a;letter-spacing:-0.05px;">20'-0"</div>
<div class="t" style="left:523px;top:131px;font-size:9.2px;color:#6a6a6a;letter-spacing:-0.05px;">15'-0"</div>
<div class="t" style="left:661px;top:131px;font-size:9.2px;color:#6a6a6a;letter-spacing:-0.05px;">10'-0"</div>
<div class="t" style="left:800px;top:131px;font-size:9.2px;color:#6a6a6a;letter-spacing:-0.05px;">5'-0"</div>
<div class="a" style="left:184px;top:142px;width:14px;height:399px;overflow:hidden">
<div class="t" style="left:4px;top:10px;font-size:9.2px;color:#6a6a6a;letter-spacing:-0.05px;transform-origin:0 0;transform:rotate(-90deg)">15'-0"</div>
<div class="t" style="left:4px;top:147.5px;font-size:9.2px;color:#6a6a6a;letter-spacing:-0.05px;transform-origin:0 0;transform:rotate(-90deg)">10'-0"</div>
<div class="t" style="left:4px;top:288px;font-size:9.2px;color:#6a6a6a;letter-spacing:-0.05px;transform-origin:0 0;transform:rotate(-90deg)">5'-0"</div>
</div>
<div class="a" style="left:204px;top:147px;width:148px;height:250px;background:#f0f0f0;border-top:1px solid #f0f0f0;border-left:1px solid #f0f0f0;border-right:1px solid #696969;border-bottom:1px solid #696969;"></div>
<div class="a" style="left:205px;top:148px;width:146px;height:248px;border-top:1px solid #fff;border-left:1px solid #fff;border-right:1px solid #a0a0a0;border-bottom:1px solid #a0a0a0;"></div>
<div class="a" style="left:208px;top:151px;width:140px;height:23px;background:#c1cedb;"></div>
<div class="t" style="left:210px;top:156px;font-size:13px;font-weight:700;letter-spacing:0.25px;">Attributes</div>
<svg class="o" width="877" height="541">
<path d="M336.5 159.5 L342.5 165.5 M342.5 159.5 L336.5 165.5" stroke="#111" stroke-width="1.5"/>
<path d="M316.5 158.5 H321.5 M317.5 158.5 V162.5 H320.5 V158.5 M315.5 162.5 H322.5 M319 162.5 V167" fill="none" stroke="#111" stroke-width="1.1"/>
<rect x="234.5" y="180.5" width="14" height="14" fill="none" stroke="#fff" stroke-width="1"/><rect x="235.5" y="181.5" width="12" height="12" fill="url(#gq)" stroke="#000" stroke-width="1"/>
<rect x="234.5" y="242.5" width="14" height="14" fill="none" stroke="#fff" stroke-width="1"/><rect x="235.5" y="243.5" width="12" height="12" fill="url(#gq)" stroke="#000" stroke-width="1"/>
<path d="M332 185.5 H341 L336.5 190 Z" fill="#000"/>
<path d="M332 247.5 H341 L336.5 252 Z" fill="#000"/>
<rect x="227.5" y="202.5" width="117" height="33" fill="#fff" stroke="#000" stroke-width="1"/>
<rect x="227" y="264" width="118" height="34" fill="#000"/>
<defs><linearGradient id="gq" x1="0" y1="0" x2="1" y2="1"><stop offset="0" stop-color="#101010"/><stop offset="1" stop-color="#464646"/></linearGradient>
<linearGradient id="gk" x1="0" y1="0" x2="1" y2="0"><stop offset="0" stop-color="#bbb"/><stop offset="0.5" stop-color="#fff"/><stop offset="1" stop-color="#ccc"/></linearGradient></defs>
<path d="M210.5 189.5 L214.8 182.8 L221.5 186.8 L216.5 194 Z" fill="url(#gk)" stroke="#333" stroke-width="0.9" stroke-dasharray="2 0.6"/>
<circle cx="213.8" cy="182" r="1.6" fill="none" stroke="#444" stroke-width="0.8"/>
<path d="M217 183.3 Q223.5 183.5 223.3 188 Q223 191 222 191.8 Q220.8 190.5 221 187.5 Q220 185.5 217.5 185 Z" fill="#111"/>
<path d="M212.5 254 L220 245 L222 247 L214.5 256 L212 256.5 Z" fill="#d8d8f8" stroke="#555" stroke-width="0.8"/>
<path d="M220 245 L222 247 L223 245.5 L221.3 243.8 Z" fill="#e06060"/>
<path d="M210 256.5 H223.5" stroke="#333" stroke-width="1"/>
<rect x="292.5" y="320.5" width="9.5" height="9.5" fill="#fff" stroke="#333" stroke-width="1"/>
<path d="M303 321.5 V331 H293.5" fill="none" stroke="#b0b0b0" stroke-width="1"/>
<path d="M324 330.5 H331" stroke="#333" stroke-width="1" stroke-dasharray="1 1"/>
<rect x="211.5" y="339.5" width="133" height="15" fill="#fff" stroke="#999" stroke-width="1"/>
<path d="M214 346.5 H318" stroke="#000" stroke-width="1.2"/>
<path d="M220 363.5 H229 L224.5 368 Z M323 363.5 H332 L327.5 368 Z" fill="#000"/>
<path d="M255 361 V371 L246 366 Z M297 361 V371 L306 366 Z" fill="#000"/>
<rect x="269.5" y="363" width="8" height="5" rx="2.5" fill="none" stroke="#222" stroke-width="1.1"/>
<rect x="274.5" y="363" width="8" height="5" rx="2.5" fill="none" stroke="#222" stroke-width="1.1"/>
<path d="M272 365.5 H280" stroke="#aaa" stroke-width="1"/>
<rect x="208" y="375" width="140" height="1" fill="#d0d0d0"/>
<rect x="264" y="380" width="28" height="10" rx="2" fill="#a3a3a3"/>
<path d="M273 382.8 H283 L278 387.3 Z" fill="#fff"/>
</svg>
<div class="t" style="left:293px;top:157px;font-size:12px;font-weight:700;color:#222;">?</div>
<div class="t" style="left:279px;top:244px;font-size:12.3px;letter-spacing:-0.8px;">Solid</div>
<div class="t" style="left:279px;top:182px;font-size:12.3px;letter-spacing:-0.8px;">Solid</div>
<div class="t" style="left:228px;top:301px;font-size:12.3px;letter-spacing:-0.92px;">Opacity: 100%/100%</div>
<div class="t" style="left:218px;top:321px;font-size:12.3px;letter-spacing:-0.82px;">Drop Shadow</div>
<div class="t" style="left:320px;top:341px;font-size:12px;letter-spacing:-0.3px;">0.05</div>
<div class="a" style="left:204px;top:396px;width:141px;height:89px;background:#808080;"></div>
<div class="a" style="left:206px;top:398px;width:137px;height:85px;background:#f2f2f2;border-top:1px solid #fff;border-left:1px solid #fff;"></div>
<div class="a" style="left:207px;top:400px;width:136px;height:23px;background:#878787;"></div>
<div class="t" style="left:209px;top:405px;font-size:13px;font-weight:700;color:#fff;letter-spacing:-0.05px;">Snapping</div>
<div class="t" style="left:307.5px;top:405px;font-size:12.5px;font-weight:700;color:#f4f4f4;">?</div>
<svg class="o" width="877" height="541">
<path d="M330 408 L336.5 414.5 M336.5 408 L330 414.5" stroke="#fff" stroke-width="1.5"/>
<rect x="242.5" y="424.5" width="32" height="25" fill="#d5e6f6" stroke="#0078d7" stroke-width="1"/>
<rect x="275.5" y="424.5" width="32" height="25" fill="#d5e6f6" stroke="#0078d7" stroke-width="1"/>
<rect x="308.5" y="424.5" width="32" height="25" fill="#d5e6f6" stroke="#0078d7" stroke-width="1"/>
<rect x="209.5" y="455.5" width="32" height="25" fill="#d5e6f6" stroke="#0078d7" stroke-width="1"/>
<path d="M214 433.5 H235 M214 441.5 H235 M220.5 429 V446 M229 429 V446" stroke="#111" stroke-width="1.2"/>
<g fill="#fff" stroke="#0a5ce0" stroke-width="0.9"><circle cx="220.5" cy="433.5" r="1.3"/><circle cx="229" cy="433.5" r="1.3"/><circle cx="220.5" cy="441.5" r="1.3"/><circle cx="229" cy="441.5" r="1.3"/></g>
<rect x="250.5" y="432" width="16" height="11.5" fill="none" stroke="#111" stroke-width="1.2"/>
<g fill="#fff" stroke="#0a5ce0" stroke-width="0.9"><rect x="249.2" y="430.7" width="2.6" height="2.6"/><rect x="265.2" y="430.7" width="2.6" height="2.6"/><rect x="249.2" y="442.2" width="2.6" height="2.6"/><rect x="265.2" y="442.2" width="2.6" height="2.6"/><rect x="257.2" y="436.4" width="2.6" height="2.6"/></g>
<circle cx="291.5" cy="437.5" r="7" fill="none" stroke="#888" stroke-width="0.9"/>
<path d="M283 437.5 H300 M291.5 429 V446" stroke="#1a5ce0" stroke-width="1.1"/>
<path d="M291.5 437.5 L297 431" stroke="#1a5ce0" stroke-width="0.9"/>
<path d="M314.5 431 L335 444 M314.5 444 L335 431" stroke="#111" stroke-width="1.2"/>
<circle cx="324.7" cy="437.5" r="1.4" fill="#fff" stroke="#0a5ce0" stroke-width="0.9"/>
<rect x="214.5" y="462.5" width="6.5" height="6.5" fill="none" stroke="#111" stroke-width="1.1"/>
<path d="M221 465.8 H234" stroke="#0a5ce0" stroke-width="1" stroke-dasharray="2 1.5"/>
<circle cx="217.7" cy="465.7" r="0.8" fill="#0a5ce0"/>
<path d="M248 465 L268.5 476" stroke="#111" stroke-width="1.2"/>
<path d="M249 462 L257 466 M250.5 460.5 L249 463.5 M258.5 464.5 L256.5 467.5" stroke="#0a5ce0" stroke-width="0.9" fill="none"/>
<circle cx="255.5" cy="469.3" r="1.3" fill="#fff" stroke="#0a5ce0" stroke-width="0.9"/>
<path d="M283 460.2 L302.4 471.6" stroke="#1a6ae8" stroke-width="1.1" stroke-dasharray="2 1.6"/>
<path d="M285.9 462.8 L281.3 470.2 L289.3 475.4 L294.5 466.8" fill="none" stroke="#111" stroke-width="1.2"/>
<path d="M314 465 L334.5 476" stroke="#111" stroke-width="1.2"/>
<circle cx="328.5" cy="466.5" r="5.7" fill="none" stroke="#0a5ce0" stroke-width="1.2"/>
</svg>
</body></html>
